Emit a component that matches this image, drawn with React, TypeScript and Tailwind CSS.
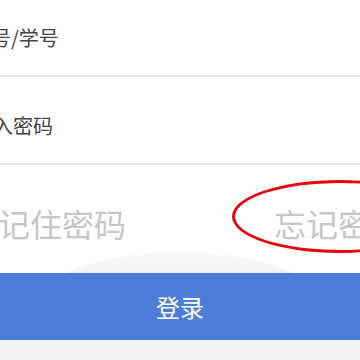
import React from "react";

export default function App() {
  return (
    <div className="relative w-[360px] h-[360px] overflow-hidden bg-white font-['Noto_Sans_CJK_SC','Noto_Sans',sans-serif]">
      {/* soft grey globe behind the button */}
      <div className="absolute left-[30px] top-[252px] w-[300px] h-[120px] rounded-[50%] bg-gradient-to-b from-[#f8f8f8] to-[#e2e2e2]" />

      <div className="relative flex flex-col">
        <div className="h-[77px] flex items-center border-b-2 border-[#e6e6e6]">
          <span className="ml-[-29px] text-[20px] text-[#444] whitespace-nowrap">
            工号/学号
          </span>
        </div>

        <div className="h-[88px] flex items-center pt-[12px] border-b-2 border-[#e6e6e6]">
          <span className="ml-[-47px] text-[20px] text-[#444] whitespace-nowrap">
            请输入密码
          </span>
        </div>

        <div className="relative h-[108px] flex items-center pt-[8px]">
          <span className="ml-[-2px] text-[32px] text-[#c6c6c6] whitespace-nowrap">
            记住密码
          </span>
          <span className="absolute left-[274px] text-[32px] text-[#c6c6c6] whitespace-nowrap">
            忘记密码
          </span>
          <div className="absolute left-[232px] top-[15px] w-[216px] h-[73px] rounded-[50%] border-[3px] border-[#e8000b]" />
        </div>

        <button className="h-[67px] w-full bg-[#4c7dd9] text-white text-[24px] shadow-[0_2px_3px_rgba(0,0,0,0.25)]">
          登录
        </button>

        <div className="h-[20px] bg-[#f2f2f2]" />
      </div>
    </div>
  );
}
